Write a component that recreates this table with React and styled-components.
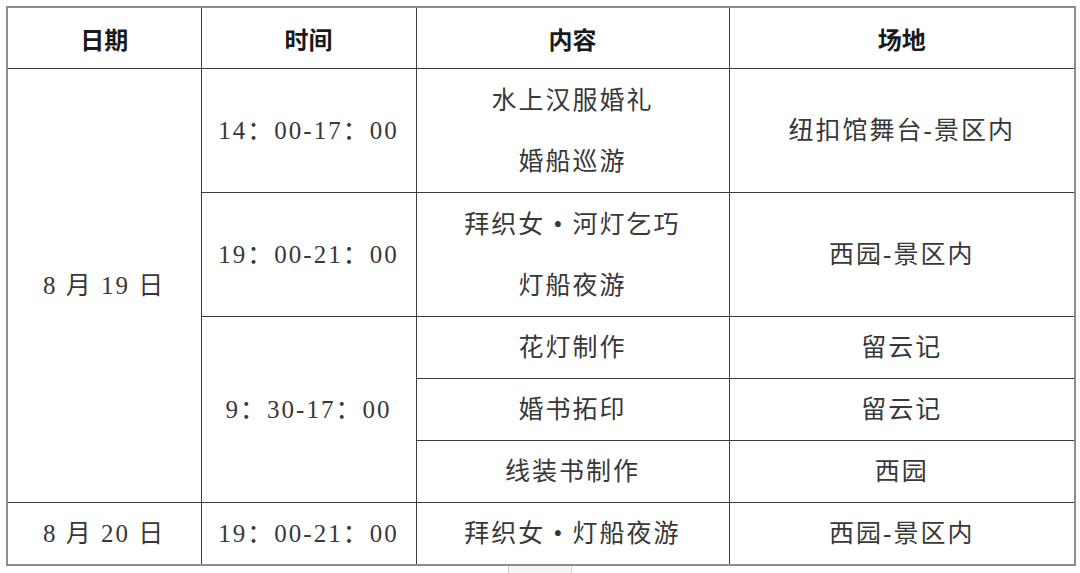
import styled, { createGlobalStyle } from "styled-components";

const GlobalStyle = createGlobalStyle`
  html, body {
    margin: 0;
    padding: 0;
    background: #fff;
  }
  body {
    font-family: "Liberation Serif", "Noto Sans CJK SC", serif;
  }
`;

const Page = styled.div`
  width: 1080px;
  height: 573px;
  padding: 6px 0 0 6px;
  box-sizing: border-box;
  overflow: hidden;
`;

const Table = styled.table`
  width: 1068px;
  table-layout: fixed;
  border-collapse: collapse;
  border: 2px solid #8c8c8c;
`;

const HeadCell = styled.th`
  height: 60px;
  padding: 0;
  border: 1px solid #3c3c3c;
  font-family: "Noto Sans CJK SC", sans-serif;
  font-size: 24px;
  font-weight: 700;
  color: #1a1a1a;
  text-align: center;
  vertical-align: middle;
`;

const Cell = styled.td`
  height: ${(p) => p.$h || 61}px;
  padding: 0;
  border: 1px solid #3c3c3c;
  font-family: "Liberation Serif", "Noto Sans CJK SC", serif;
  font-size: 25px;
  font-weight: 400;
  letter-spacing: 2px;
  color: #383838;
  text-align: center;
  vertical-align: middle;
  line-height: 61px;
`;

const Line = styled.div`
  height: 61px;
  line-height: 61px;
  white-space: nowrap;
`;

const Tab = styled.div`
  width: 62px;
  height: 8px;
  margin-left: 502px;
  border-left: 1px solid #c8c8c8;
  border-right: 1px solid #d8d8d8;
  background: #f5f5f5;
`;

const rows = [
  { time: "14：00-17：00", items: ["水上汉服婚礼", "婚船巡游"], place: "纽扣馆舞台-景区内" },
  { time: "19：00-21：00", items: ["拜织女 • 河灯乞巧", "灯船夜游"], place: "西园-景区内" },
];

const crafts = [
  { item: "花灯制作", place: "留云记" },
  { item: "婚书拓印", place: "留云记" },
  { item: "线装书制作", place: "西园" },
];

export default function App() {
  return (
    <>
      <GlobalStyle />
      <Page>
        <Table>
          <colgroup>
            <col style={{ width: 194 }} />
            <col style={{ width: 215 }} />
            <col style={{ width: 313 }} />
            <col style={{ width: 346 }} />
          </colgroup>
          <thead>
            <tr>
              <HeadCell>日期</HeadCell>
              <HeadCell>时间</HeadCell>
              <HeadCell>内容</HeadCell>
              <HeadCell>场地</HeadCell>
            </tr>
          </thead>
          <tbody>
            {rows.map((r, i) => (
              <tr key={r.time + i}>
                {i === 0 && <Cell rowSpan={5}>8 月 19 日</Cell>}
                <Cell $h={123}>{r.time}</Cell>
                <Cell $h={123}>
                  {r.items.map((t) => (
                    <Line key={t}>{t}</Line>
                  ))}
                </Cell>
                <Cell $h={123}>{r.place}</Cell>
              </tr>
            ))}
            {crafts.map((c, i) => (
              <tr key={c.item}>
                {i === 0 && <Cell rowSpan={3}>9：30-17：00</Cell>}
                <Cell>{c.item}</Cell>
                <Cell>{c.place}</Cell>
              </tr>
            ))}
            <tr>
              <Cell>8 月 20 日</Cell>
              <Cell>19：00-21：00</Cell>
              <Cell>拜织女 • 灯船夜游</Cell>
              <Cell>西园-景区内</Cell>
            </tr>
          </tbody>
        </Table>
        <Tab />
      </Page>
    </>
  );
}
